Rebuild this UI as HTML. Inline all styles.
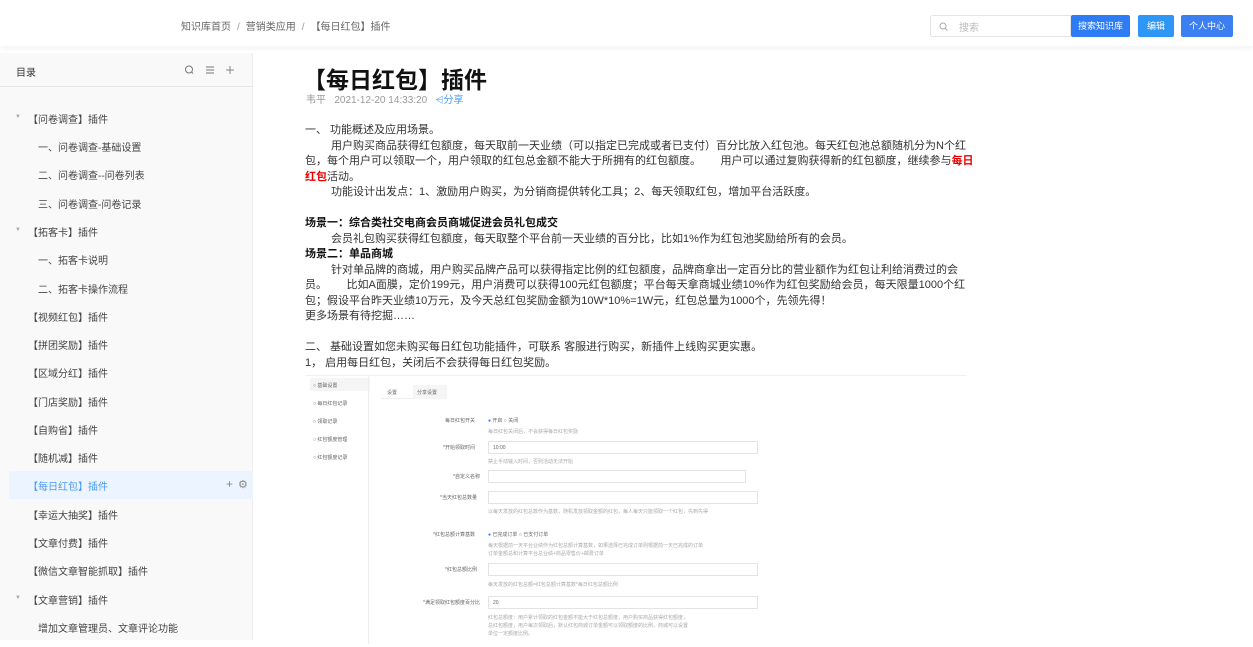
<!DOCTYPE html><html><head><meta charset="utf-8"><style>
*{margin:0;padding:0;box-sizing:border-box}
body{width:1253px;height:647px;overflow:hidden;background:#fff;font-family:"Liberation Sans","Noto Sans CJK SC",sans-serif;color:#333;position:relative}
.hdr{position:absolute;left:0;top:0;width:1253px;height:46px;background:#fff;box-shadow:0 2px 6px rgba(0,0,0,.06);z-index:2}
.bc{position:absolute;left:181px;top:18px;font-size:10px;color:#666}
.bc span{color:#999;margin:0 6px}
.srch{position:absolute;left:930px;top:15px;width:141px;height:22px;border:1px solid #e3e3e8;border-radius:3px 0 0 3px;font-size:10px;color:#bbb;padding:3px 0 0 28px}
.btn{position:absolute;top:15px;height:22px;color:#fff;font-size:9px;text-align:center;line-height:22px;border-radius:2px}
.side{position:absolute;left:0;top:53px;width:253px;height:594px;background:#f9f9f9;border-right:1px solid #eee}
.side .t{position:absolute;left:16px;top:11px;font-size:10px;color:#333}
.side .ln{position:absolute;left:0;top:33px;width:253px;border-top:1px solid #e6e6e6}
.it{position:absolute;font-size:10px;color:#444;white-space:nowrap}
.ar{position:absolute;left:15px;font-size:6px;color:#aaa}
.sel{position:absolute;left:9px;top:471px;width:244px;height:28px;background:#ecf5ff}
.main{position:absolute;left:305px;font-size:11px;color:#333;line-height:15.5px;white-space:nowrap}
h1{position:absolute;left:303px;top:61px;font-size:23px;font-weight:bold;color:#111}
.meta{position:absolute;left:306px;top:91px;font-size:10px;color:#999}
.ind{padding-left:26px}
.shot{position:absolute;left:305px;top:375px;width:662px;height:268px;background:#fff;border-top:1px solid #f0f0f0}
.f{position:absolute;font-size:5px;color:#666;white-space:nowrap}
.in{position:absolute;height:13px;border:1px solid #e3e3e3;background:#fff}
</style></head><body>
<div class="hdr">
<div class="bc">知识库首页<span>/</span>营销类应用<span>/</span>【每日红包】插件</div>
<div class="srch">搜索</div>
<svg style="position:absolute;left:939px;top:22px" width="9" height="9"><circle cx="4" cy="4" r="3" fill="none" stroke="#aaa" stroke-width="1"/><path d="M6.3 6.3L8.5 8.5" stroke="#aaa"/></svg>
<div class="btn" style="left:1071px;width:59px;background:#2d7cf6">搜索知识库</div>
<div class="btn" style="left:1138px;width:36px;background:#2e96f5">编辑</div>
<div class="btn" style="left:1181px;width:52px;background:#3b7ff0">个人中心</div>
</div>
<div class="side">
<div class="t">目录</div>
<svg style="position:absolute;left:184px;top:12px" width="50" height="10"><circle cx="5" cy="4.5" r="3.5" fill="none" stroke="#777"/><path d="M7.5 7L9 8.5" stroke="#777"/><path d="M22 2h8M22 5h8M22 8h8" stroke="#777"/><path d="M46 1v8M42 5h8" stroke="#888"/></svg>
<div class="ln"></div>
</div>
<div class="sel"></div>
<div style="position:absolute;left:226px;top:477px;font-size:12px;color:#888">+</div>
<div style="position:absolute;left:238px;top:478px;font-size:11px;color:#888">⚙</div>
<div class="ar" style="top:114px">▼</div>
<div class="it" style="left:28px;top:111px">【问卷调查】插件</div>
<div class="it" style="left:38px;top:139px">一、问卷调查-基础设置</div>
<div class="it" style="left:38px;top:167px">二、问卷调查--问卷列表</div>
<div class="it" style="left:38px;top:196px">三、问卷调查-问卷记录</div>
<div class="ar" style="top:227px">▼</div>
<div class="it" style="left:28px;top:224px">【拓客卡】插件</div>
<div class="it" style="left:38px;top:252px">一、拓客卡说明</div>
<div class="it" style="left:38px;top:281px">二、拓客卡操作流程</div>
<div class="it" style="left:28px;top:309px">【视频红包】插件</div>
<div class="it" style="left:28px;top:337px">【拼团奖励】插件</div>
<div class="it" style="left:28px;top:365px">【区域分红】插件</div>
<div class="it" style="left:28px;top:394px">【门店奖励】插件</div>
<div class="it" style="left:28px;top:422px">【自购省】插件</div>
<div class="it" style="left:28px;top:450px">【随机减】插件</div>
<div class="it" style="left:28px;top:478px;color:#4a9af5">【每日红包】插件</div>
<div class="it" style="left:28px;top:507px">【幸运大抽奖】插件</div>
<div class="it" style="left:28px;top:535px">【文章付费】插件</div>
<div class="it" style="left:28px;top:563px">【微信文章智能抓取】插件</div>
<div class="ar" style="top:595px">▼</div>
<div class="it" style="left:28px;top:592px">【文章营销】插件</div>
<div class="it" style="left:38px;top:620px">增加文章管理员、文章评论功能</div>
<div style="position:absolute;left:0;top:640px;width:253px;height:7px;background:#fff"></div>
<h1>【每日红包】插件</h1>
<div class="meta">韦平 &nbsp; 2021-12-20 14:33:20 &nbsp; <span style="color:#4a9af5">⩤分享</span></div>
<div class="main" style="top:123px">
<div>一、 功能概述及应用场景。</div>
<div class="ind">用户购买商品获得红包额度，每天取前一天业绩（可以指定已完成或者已支付）百分比放入红包池。每天红包池总额随机分为N个红</div>
<div>包，每个用户可以领取一个，用户领取的红包总金额不能大于所拥有的红包额度。　　 用户可以通过复购获得新的红包额度，继续参与<b style="color:#e00">每日</b></div>
<div><b style="color:#e00">红包</b>活动。</div>
<div class="ind">功能设计出发点：1、激励用户购买，为分销商提供转化工具；2、每天领取红包，增加平台活跃度。</div>
<div>&nbsp;</div>
<div style="font-weight:bold;color:#111">场景一：综合类社交电商会员商城促进会员礼包成交</div>
<div class="ind">会员礼包购买获得红包额度，每天取整个平台前一天业绩的百分比，比如1%作为红包池奖励给所有的会员。</div>
<div style="font-weight:bold;color:#111">场景二：单品商城</div>
<div class="ind">针对单品牌的商城，用户购买品牌产品可以获得指定比例的红包额度，品牌商拿出一定百分比的营业额作为红包让利给消费过的会</div>
<div>员。　　 比如A面膜，定价199元，用户消费可以获得100元红包额度；平台每天拿商城业绩10%作为红包奖励给会员，每天限量1000个红</div>
<div>包；假设平台昨天业绩10万元，及今天总红包奖励金额为10W*10%=1W元，红包总量为1000个，先领先得！</div>
<div>更多场景有待挖掘……</div>
<div>&nbsp;</div>
<div>二、 基础设置如您未购买每日红包功能插件，可联系 客服进行购买，新插件上线购买更实惠。</div>
<div>1， 启用每日红包，关闭后不会获得每日红包奖励。</div>
</div>
<div class="shot">
<div style="position:absolute;left:5px;top:2px;width:60px;height:13px;background:#f5f5f5"></div>
<div style="position:absolute;left:63px;top:0;width:1px;height:268px;background:#eee"></div>
<div class="f" style="left:8px;top:6px">○ 基础设置</div>
<div class="f" style="left:8px;top:24px">○ 每日红包记录</div>
<div class="f" style="left:8px;top:42px">○ 领取记录</div>
<div class="f" style="left:8px;top:60px">○ 红包额度管理</div>
<div class="f" style="left:8px;top:78px">○ 红包额度记录</div>
<div style="position:absolute;left:76px;top:9px;width:66px;height:14px;border-bottom:1px solid #eee"></div>
<div style="position:absolute;left:108px;top:9px;width:34px;height:14px;background:#f5f5f5"></div>
<div class="f" style="left:82px;top:13px">设置</div><div class="f" style="left:112px;top:13px">分享设置</div>
<div class="f" style="left:140px;top:41px">每日红包开关</div><div class="f" style="left:183px;top:41px;color:#2d7cf6">● <span style="color:#666">开启 ○ 关闭</span></div>
<div class="f" style="left:183px;top:52px;color:#aaa">每日红包关闭后，不会获得每日红包奖励</div>
<div class="f" style="left:138px;top:68px">*开始领取时间</div><div class="in" style="left:183px;top:65px;width:270px"></div><div class="f" style="left:188px;top:69px">10:00</div>
<div class="f" style="left:183px;top:82px;color:#aaa">禁止手动输入时间，否则活动无法开始</div>
<div class="f" style="left:148px;top:97px">*自定义名称</div><div class="in" style="left:183px;top:94px;width:258px"></div>
<div class="f" style="left:135px;top:118px">*当天红包总数量</div><div class="in" style="left:183px;top:115px;width:270px"></div>
<div class="f" style="left:183px;top:132px;color:#aaa">以每天发放的红包总数作为基数，随机发放领取金额的红包，每人每天只能领取一个红包，先到先得</div>
<div class="f" style="left:128px;top:155px">*红包总额计算基数</div><div class="f" style="left:183px;top:155px;color:#2d7cf6">● <span style="color:#666">已完成订单 ○ 已支付订单</span></div>
<div class="f" style="left:183px;top:166px;color:#aaa">每天根据前一天平台业绩作为红包总额计算基数，如果选择已完成订单则根据前一天已完成的订单</div>
<div class="f" style="left:183px;top:174px;color:#aaa">订单金额总和计算平台总业绩+商品零售价+邮费订单</div>
<div class="f" style="left:140px;top:190px">*红包总额比例</div><div class="in" style="left:183px;top:187px;width:270px"></div>
<div class="f" style="left:183px;top:205px;color:#aaa">每天发放的红包总额=红包总额计算基数*每日红包总额比例</div>
<div class="f" style="left:118px;top:223px">*满足领取红包额度百分比</div><div class="in" style="left:183px;top:220px;width:270px"></div><div class="f" style="left:188px;top:224px">20</div>
<div class="f" style="left:183px;top:238px;color:#aaa">红包总额度：用户累计领取的红包金额不能大于红包总额度，用户购买商品获得红包额度，</div>
<div class="f" style="left:183px;top:246px;color:#aaa">总红包额度，用户每次领取后，默认红包商城订单金额可以领取额度的比例，商城可以设置</div>
<div class="f" style="left:183px;top:254px;color:#aaa">单位一定额度比例。</div>
</div>
</body></html>
